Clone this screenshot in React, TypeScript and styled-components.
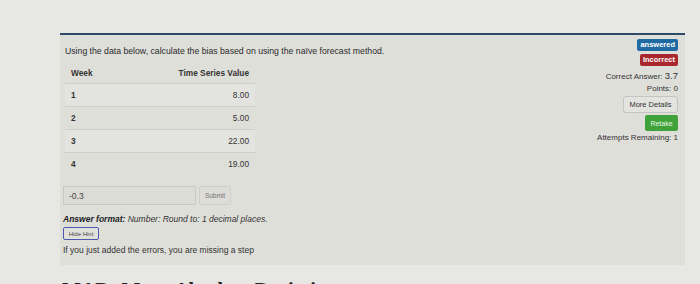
import styled, { createGlobalStyle } from 'styled-components'

const GlobalStyle = createGlobalStyle`
  body {
    margin: 0;
    background: #e7e7e3;
    font-family: "Liberation Sans", Arial, sans-serif;
    color: #2a2a2a;
  }
`

const rows = [
  { week: 1, value: '8.00' },
  { week: 2, value: '5.00' },
  { week: 3, value: '22.00' },
  { week: 4, value: '19.00' },
]

export default function App() {
  return (
    <>
      <GlobalStyle />
      <Page>
        <Panel>
          <Question>
            <Prompt>Using the data below, calculate the bias based on using the naïve forecast method.</Prompt>
            <DataTable>
              <thead>
                <tr>
                  <Th>Week</Th>
                  <Th $right>Time Series Value</Th>
                </tr>
              </thead>
              <tbody>
                {rows.map((r) => (
                  <Row key={r.week}>
                    <Td $bold>{r.week}</Td>
                    <Td $right>{r.value}</Td>
                  </Row>
                ))}
              </tbody>
            </DataTable>
            <AnswerRow>
              <AnswerInput readOnly value="-0.3" />
              <SubmitButton>Submit</SubmitButton>
            </AnswerRow>
            <Format>
              <b>Answer format:</b> Number: Round to: 1 decimal places.
            </Format>
            <HintButton>Hide Hint</HintButton>
            <Hint>If you just added the errors, you are missing a step</Hint>
          </Question>
          <Status>
            <Badge $color="#1f6aa3">answered</Badge>
            <Badge $color="#a8282e">Incorrect</Badge>
            <Info>
              Correct Answer: <Big>3.7</Big>
            </Info>
            <Info>Points: 0</Info>
            <DetailsButton>More Details</DetailsButton>
            <RetakeButton>Retake</RetakeButton>
            <Info>Attempts Remaining: 1</Info>
          </Status>
        </Panel>
        <Heading>MAD: Mean Absolute Deviation</Heading>
      </Page>
    </>
  )
}

const Page = styled.div`
  padding: 33px 15px 0 60px;
  height: 284px;
  box-sizing: border-box;
  overflow: hidden;
`

const Panel = styled.div`
  display: flex;
  justify-content: space-between;
  height: 232px;
  box-sizing: border-box;
  border-top: 2px solid #2d4a68;
  background: #dfdfda;
  padding: 0 7px 0 3px;
`

const Question = styled.div`
  display: flex;
  flex-direction: column;
  align-items: flex-start;
  padding-top: 11px;
  font-size: 8.5px;
`

const Prompt = styled.div`
  padding-left: 2px;
  font-size: 8.7px;
  line-height: 10px;
`

const DataTable = styled.table`
  margin: 8px 0 0 2px;
  width: 190px;
  border-collapse: collapse;
  font-size: 8.3px;
`

const Th = styled.th<{ $right?: boolean }>`
  text-align: ${(p) => (p.$right ? 'right' : 'left')};
  padding: 4px 6px 0;
  height: 15px;
  font-weight: bold;
  color: #333;
  vertical-align: top;
`

const Row = styled.tr`
  border-top: 1px solid #cfcfca;
  &:nth-child(odd) {
    background: #e3e3df;
  }
`

const Td = styled.td<{ $right?: boolean; $bold?: boolean }>`
  height: 22px;
  padding: 0 6px;
  text-align: ${(p) => (p.$right ? 'right' : 'left')};
  font-weight: ${(p) => (p.$bold ? 'bold' : 'normal')};
  color: #333;
`

const AnswerRow = styled.div`
  display: flex;
  gap: 3px;
  margin-top: 11px;
`

const AnswerInput = styled.input`
  width: 133px;
  height: 19px;
  box-sizing: border-box;
  border: 1px solid #c9c9c4;
  background: #dcdcd7;
  font-family: inherit;
  font-size: 8.5px;
  color: #444;
  padding: 0 5px;
`

const SubmitButton = styled.button`
  height: 19px;
  width: 32px;
  padding: 0;
  border: 1px solid #cfcfca;
  border-radius: 2px;
  background: #dddcd7;
  font-family: inherit;
  font-size: 6.5px;
  color: #777;
`

const Format = styled.div`
  margin-top: 9px;
  font-style: italic;
  font-size: 8.5px;
  color: #333;
  b {
    color: #222;
  }
`

const HintButton = styled.button`
  margin-top: 3px;
  height: 13px;
  width: 36px;
  padding: 0;
  border: 1.5px solid #4f56b0;
  border-radius: 2px;
  background: #e1e1dc;
  font-family: inherit;
  font-size: 6px;
  color: #444;
`

const Hint = styled.div`
  margin-top: 5px;
  font-size: 8.5px;
  color: #333;
`

const Status = styled.div`
  display: flex;
  flex-direction: column;
  align-items: flex-end;
  padding-top: 4px;
  font-size: 8px;
  color: #333;
`

const Badge = styled.span<{ $color: string }>`
  background: ${(p) => p.$color};
  color: #fff;
  font-weight: bold;
  font-size: 7.5px;
  padding: 2px 3px;
  border-radius: 2px;
  margin-bottom: 3px;
  line-height: 8px;
`

const Info = styled.div`
  margin-top: 2px;
  line-height: 10px;
`

const Big = styled.span`
  font-size: 9.5px;
`

const DetailsButton = styled.button`
  margin-top: 2px;
  height: 17px;
  width: 55px;
  padding: 0;
  border: 1px solid #c4c4c0;
  border-radius: 3px;
  background: #e3e3e0;
  font-family: inherit;
  font-size: 7.5px;
  color: #333;
`

const RetakeButton = styled.button`
  margin-top: 2px;
  height: 16px;
  width: 33px;
  padding: 0;
  border: none;
  border-radius: 2px;
  background: #3fa33a;
  font-family: inherit;
  font-size: 7px;
  color: #e8f5e6;
`

const Heading = styled.h2`
  margin: 14px 0 0 2px;
  font-family: "Liberation Serif", "Times New Roman", serif;
  font-size: 20px;
  font-weight: bold;
  color: #222;
  white-space: nowrap;
`
